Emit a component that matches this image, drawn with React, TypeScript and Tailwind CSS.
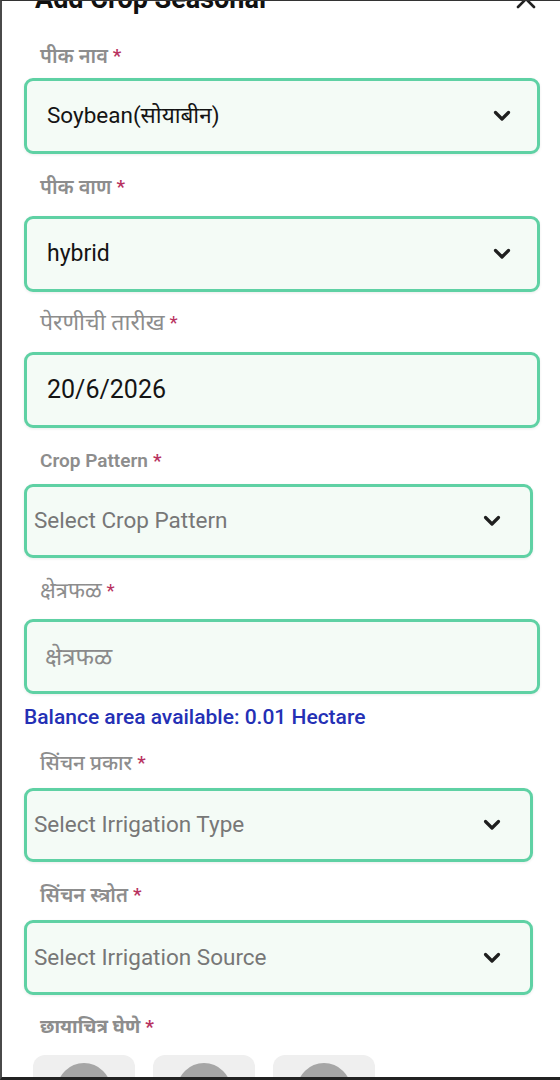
import React from "react";

const FONT = { fontFamily: 'Roboto, "Noto Sans", "Noto Sans Devanagari", sans-serif' };

function Chevron() {
  return (
    <svg width="18" height="12" viewBox="0 0 18 12" fill="none">
      <path d="M2.5 2.5 L9 9 L15.5 2.5" stroke="#1f1f1f" strokeWidth="3.2" strokeLinecap="round" strokeLinejoin="round" />
    </svg>
  );
}

function Label({ text, cls, weight }: { text: string; cls: string; weight: string }) {
  return (
    <div className={`h-[28px] flex items-center pl-[38px] leading-[28px] text-[#8d8d8d] ${weight} ${cls}`}>
      <span>{text}</span>
      <span className="ml-[5px] text-[19px] text-[#b8325f]">*</span>
    </div>
  );
}

const BOX = "rounded-[9px] border-[3.5px] border-[#5fd1a4] bg-[#f4fbf6] flex items-center shadow-[0_1px_3px_rgba(0,0,0,0.08)]";

export default function App() {
  return (
    <div style={FONT} className="w-[560px] h-[1080px] overflow-hidden bg-white border-l-2 border-[#4a4a4a] border-t border-t-[#333] border-b-[3px] border-b-[#222] box-border">
      {/* title */}
      <div className="-mt-[15px] h-[26px] flex items-center justify-between pl-[33px] pr-[22px]">
        <span className="text-[27px] leading-[26px] font-bold text-[#111]">Add Crop Seasonal</span>
        <svg width="24" height="24" viewBox="0 0 24 24" fill="none">
          <path d="M4 4 L20 20 M20 4 L4 20" stroke="#222" strokeWidth="2.6" strokeLinecap="round" />
        </svg>
      </div>

      {/* Field 1 */}
      <Label text="पीक नाव" cls="mt-[30px] text-[20px]" weight="font-semibold" />
      <div className={`mt-[8px] ml-[22px] w-[516px] h-[76px] justify-between pl-[20px] pr-[26px] ${BOX}`}>
        <span className="text-[22.5px] text-[#141414]">Soybean(सोयाबीन)</span>
        <Chevron />
      </div>

      {/* Field 2 */}
      <Label text="पीक वाण" cls="mt-[19px] text-[20px]" weight="font-semibold" />
      <div className={`mt-[15px] ml-[22px] w-[516px] h-[76px] justify-between pl-[20px] pr-[26px] ${BOX}`}>
        <span className="text-[23px] text-[#141414]">hybrid</span>
        <Chevron />
      </div>

      {/* Field 3 */}
      <Label text="पेरणीची तारीख" cls="mt-[17px] text-[23px]" weight="font-normal" />
      <div className={`mt-[15px] ml-[22px] w-[516px] h-[76px] pl-[20px] ${BOX}`}>
        <span className="text-[25px] text-[#141414]">20/6/2026</span>
      </div>

      {/* Field 4 */}
      <Label text="Crop Pattern" cls="mt-[19px] text-[19px]" weight="font-semibold" />
      <div className={`mt-[9px] ml-[22px] w-[509px] h-[74px] justify-between pl-[7px] pr-[29px] ${BOX}`}>
        <span className="text-[22.5px] text-[#777]">Select Crop Pattern</span>
        <Chevron />
      </div>

      {/* Field 5 */}
      <Label text="क्षेत्रफळ" cls="mt-[19px] text-[22px]" weight="font-normal" />
      <div className={`mt-[14px] ml-[22px] w-[516px] h-[75px] pl-[18px] ${BOX}`}>
        <span className="text-[24px] text-[#8a8a8a]">क्षेत्रफळ</span>
      </div>

      {/* Balance */}
      <div className="mt-[10px] h-[28px] pl-[22px] flex items-center text-[21px] font-medium text-[#2430b5]">
        Balance area available: 0.01 Hectare
      </div>

      {/* Field 6 */}
      <Label text="सिंचन प्रकार" cls="mt-[17px] text-[20.5px]" weight="font-medium" />
      <div className={`mt-[11px] ml-[22px] w-[509px] h-[74px] justify-between pl-[7px] pr-[29px] ${BOX}`}>
        <span className="text-[22.5px] text-[#777]">Select Irrigation Type</span>
        <Chevron />
      </div>

      {/* Field 7 */}
      <Label text="सिंचन स्त्रोत" cls="mt-[19px] text-[20px]" weight="font-semibold" />
      <div className={`mt-[11px] ml-[22px] w-[509px] h-[75px] justify-between pl-[7px] pr-[29px] ${BOX}`}>
        <span className="text-[22.5px] text-[#777]">Select Irrigation Source</span>
        <Chevron />
      </div>

      {/* Field 8 */}
      <Label text="छायाचित्र घेणे" cls="mt-[18px] text-[19px]" weight="font-bold" />
      <div className="mt-[14px] ml-[31px] flex gap-[18px]">
        {[0, 1, 2].map((i) => (
          <div key={i} className="w-[102px] h-[90px] rounded-[12px] bg-[#efefef] flex justify-center pt-[8px]">
            <div className="w-[54px] h-[54px] rounded-full bg-[#a6a6a6] flex items-end justify-center pb-[6px]">
              <div className="w-[12px] h-[10px] rounded-[2px] bg-[#111]" />
            </div>
          </div>
        ))}
      </div>
    </div>
  );
}
